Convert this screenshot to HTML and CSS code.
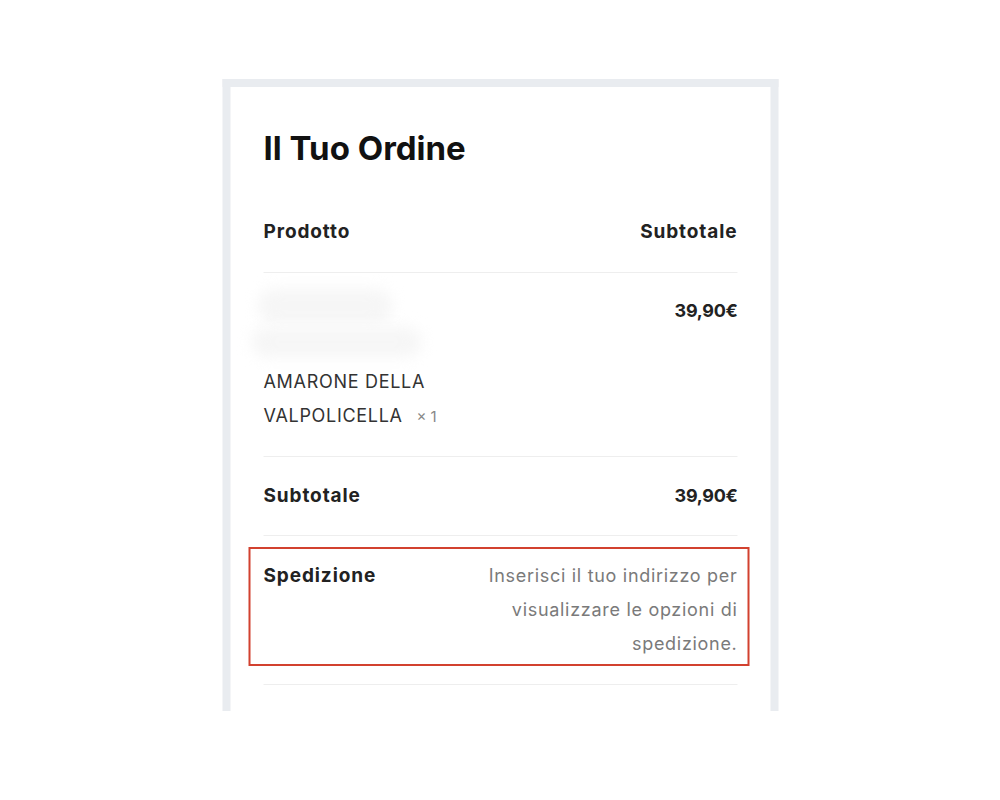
FILE: index.html
```html
<!DOCTYPE html>
<html lang="it">
<head>
    <meta charset="UTF-8">
    <meta name="viewport" content="width=device-width, initial-scale=1.0">
    <title>Il Tuo Ordine</title>
    <link rel="stylesheet" href="styles.css">
</head>
<body>
    <div class="order-box">
        <h2 class="order-title">Il Tuo Ordine</h2>

        <div class="row row-head">
            <span class="label">Prodotto</span>
            <span class="label">Subtotale</span>
        </div>

        <div class="row row-item">
            <div class="item-info">
                <!-- product thumbnail, blurred out -->
                <div class="item-thumb">
                    <span class="smudge smudge-a"></span>
                    <span class="smudge smudge-b"></span>
                </div>
                <div class="item-name">AMARONE DELLA<br>VALPOLICELLA <span class="qty">&times; 1</span></div>
            </div>
            <span class="amount">39,90€</span>
        </div>

        <div class="row row-total">
            <span class="label">Subtotale</span>
            <span class="amount">39,90€</span>
        </div>

        <div class="row row-shipping">
            <div class="shipping-box">
                <span class="label">Spedizione</span>
                <span class="shipping-note">Inserisci il tuo indirizzo per visualizzare le opzioni di spedizione.</span>
            </div>
        </div>
    </div>
</body>
</html>
```

FILE: styles.css
```css
body {
    margin: 0;
    background: #fff;
    font-family: Inter, "Noto Sans", sans-serif;
    color: #222;
}
.order-box {
    width: 474px;
    height: 624px;
    margin: 79px auto 0;
    padding: 0 33px;
    border: 8px solid #e9ecf0;
    border-bottom: none;
    overflow: hidden;
    transform: translateX(0.5px);
}
.order-title {
    margin: 0;
    padding-top: 43px;
    font-size: 33px;
    line-height: 36px;
    font-weight: 700;
    color: #111;
}
.row {
    display: flex;
    justify-content: space-between;
    align-items: flex-start;
    border-bottom: 1px solid #eeeeee;
    font-size: 18px;
    line-height: 24px;
    letter-spacing: 0.7px;
}
.label {
    font-size: 19px;
    font-weight: 700;
    letter-spacing: 0.9px;
    color: #222;
}
.amount {
    font-weight: 700;
    letter-spacing: -0.3px;
    color: #222;
}
.row-head {
    margin-top: 54px;
    padding-bottom: 28px;
}
.row-item {
    padding-bottom: 22px;
}
.row-item .amount {
    padding-top: 26px;
}
.item-info {
    padding-top: 12px;
}
.item-thumb {
    position: relative;
    width: 180px;
    height: 75px;
    margin-bottom: 5px;
}
.smudge {
    position: absolute;
    background: #f6f6f6;
    border-radius: 20px;
    filter: blur(7px);
}
.smudge-a {
    left: -6px;
    top: 4px;
    width: 135px;
    height: 34px;
}
.smudge-b {
    left: -12px;
    top: 42px;
    width: 170px;
    height: 30px;
}
.item-name {
    line-height: 34px;
    font-weight: 400;
    color: #333;
}
.qty {
    margin-left: 8px;
    font-size: 15px;
    letter-spacing: 0;
    color: #888;
}
.row-total {
    padding: 27px 0;
}
.row-shipping {
    padding: 11px 0 18px;
}
.shipping-box {
    flex: 1;
    display: flex;
    justify-content: space-between;
    align-items: flex-start;
    margin: 0 -12px 0 -15px;
    padding: 10px 10px 3px 13px;
    border: 2px solid #d2412f;
    line-height: 34px;
}
.shipping-note {
    width: 265px;
    text-align: right;
    color: #7a7a7a;
}
```
